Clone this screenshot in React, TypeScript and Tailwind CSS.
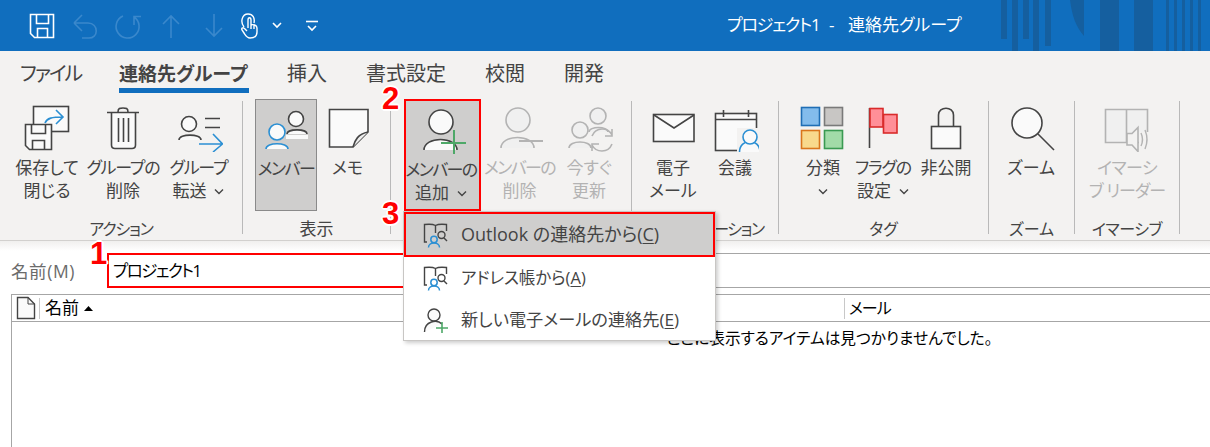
import React from "react";

const ink = "#444444";
const off = "#b3b3b3";
const blue = "#2b8fd3";
const F = "#fafafa";

const s = { fill: "none", stroke: ink, strokeWidth: 1.6 };

function Ic({ children, size = 48 }: { children: React.ReactNode; size?: number }) {
  return (
    <svg width={size} height={size} viewBox={`0 0 ${size} ${size}`} className="shrink-0" strokeLinejoin="miter">
      {children}
    </svg>
  );
}

function Person({ cx, cy, r, x1, x2, y, color, fill = "#fafafa" }: { cx: number; cy: number; r: number; x1: number; x2: number; y: number; color: string; fill?: string }) {
  return (
    <g stroke={color} strokeWidth={1.6} fill={fill}>
      <path d={`M${x1} ${y} C${x1} ${cy + r + 2} ${x2} ${cy + r + 2} ${x2} ${y}`} stroke={color} />
      <circle cx={cx} cy={cy} r={r} />
    </g>
  );
}

const SaveClose = () => (
  <Ic>
    <rect x="10.5" y="2.5" width="35" height="25" fill={F} stroke={ink} strokeWidth="1.6" />
    <path d="M2.5 20.5H28.5V45.5H6.5L2.5 41.5Z" fill={F} {...{ stroke: ink, strokeWidth: 1.6 }} />
    <path d="M8.5 20.5V29.5H22.5V20.5M9.5 45.5V36.5H21.5V45.5" {...s} />
    <path d="M22 19C24 14 29 13 40 13M33 6L40 13L33 20" fill="none" stroke={blue} strokeWidth="1.6" />
  </Ic>
);
const Trash = () => (
  <Ic>
    <path d="M12.5 9V41Q12.5 44.5 16 44.5H33Q36.5 44.5 36.5 41V9" fill={F} stroke={ink} strokeWidth="1.6" />
    <path d="M8 8.5H40M19 8C19 4 21 4 24 4S29 4 29 8M19.5 14V38M24.5 14V38M29.5 14V38" {...s} />
  </Ic>
);
const Forward = () => (
  <Ic>
    <Person cx={14} cy={20} r={7.5} x1={4} x2={26} y={36} color={ink} />
    <path d="M30 14.5H45M30 23.5H45" {...s} />
    <path d="M24 40H47M38 30L47.5 40L38 48" fill="none" stroke={blue} strokeWidth="1.6" />
  </Ic>
);
const Members = () => (
  <Ic>
    <Person cx={34} cy={14} r={7.5} x1={25} x2={45} y={29} color={ink} />
    <path d="M24 30H46V34H24Z" fill="#fafafa" />
    <Person cx={15} cy={27} r={8} x1={4} x2={26} y={44} color={blue} />
  </Ic>
);
const Note = () => (
  <Ic>
    <path d="M5.5 5.5H44V28L29 43H5.5Z" fill={F} stroke={ink} strokeWidth="1.6" />
    <path d="M29 43C31 36 34 30 44 28" fill="#eeeeee" stroke={ink} strokeWidth="1.6" />
  </Ic>
);
const AddMember = () => (
  <Ic>
    <Person cx={22} cy={16} r={12} x1={5} x2={38} y={44} color={ink} />
    <path d="M22 37H47M35 24V48" fill="none" stroke="#4ea868" strokeWidth="2" />
  </Ic>
);
const DelMember = () => (
  <Ic>
    <Person cx={22} cy={16} r={12} x1={5} x2={38} y={44} color={off} fill="#f0f0f0" />
    <path d="M23 37H47" fill="none" stroke={off} strokeWidth="2" />
  </Ic>
);
const Refresh = () => (
  <Ic>
    <Person cx={33} cy={12} r={8} x1={24} x2={43} y={28} color={off} fill="#f0f0f0" />
    <Person cx={15} cy={26} r={8} x1={4} x2={26} y={44} color={off} fill="#f0f0f0" />
    <path d="M27 32C29 27 33 25 37 25C42 25 45 27 47 31M47 25V32H40M47 40C45 45 41 47 37 47C32 47 29 45 27 41M27 47V40H34" fill="none" stroke={off} strokeWidth="1.6" />
  </Ic>
);
const Mail = () => (
  <Ic>
    <rect x="4.5" y="10.5" width="40.5" height="27" fill={F} stroke={ink} strokeWidth="1.6" />
    <path d="M5 11L25 24L45 11" {...s} />
  </Ic>
);
const Calendar = () => (
  <Ic>
    <rect x="4.5" y="9.5" width="41" height="37" fill={F} stroke={ink} strokeWidth="1.6" />
    <path d="M4.5 15.5H45.5M12.5 6V13M37.5 6V13" {...s} />
    <rect x="26" y="24" width="22" height="24" fill="#f3f2f1" />
    <path d="M28.5 48C28.5 34 49 34 49 48" fill="#fafafa" stroke={blue} strokeWidth="1.6" />
    <circle cx="39" cy="33" r="7" fill="#fafafa" stroke={blue} strokeWidth="1.6" />
  </Ic>
);
const Categories = () => (
  <Ic>
    <rect x="2.5" y="3.5" width="18" height="18" fill="#83bcec" stroke="#1f6eb5" strokeWidth="1.6" />
    <rect x="25.5" y="3.5" width="18" height="18" fill="#c8c6c4" stroke="#7a7a7a" strokeWidth="1.6" />
    <rect x="2.5" y="26.5" width="18" height="18" fill="#f8d98c" stroke="#d9761c" strokeWidth="1.6" />
    <rect x="25.5" y="26.5" width="18" height="18" fill="#a2dba8" stroke="#3a9a52" strokeWidth="1.6" />
  </Ic>
);
const Flag = () => (
  <Ic>
    <path d="M10.5 4V44" {...s} />
    <rect x="11" y="4.5" width="13" height="18.5" fill="#ff8f98" stroke="#d92b2b" strokeWidth="1.6" />
    <rect x="24.5" y="10.5" width="13.5" height="18.5" fill="#ff8f98" stroke="#d92b2b" strokeWidth="1.6" />
  </Ic>
);
const Lock = () => (
  <Ic>
    <path d="M16.5 22V11C16.5 2 31.5 2 31.5 11V22" {...s} />
    <rect x="9.5" y="22.5" width="29" height="22" fill={F} stroke={ink} strokeWidth="1.6" />
  </Ic>
);
const Zoom = () => (
  <Ic>
    <circle cx="20" cy="19" r="15" fill={F} stroke={ink} strokeWidth="1.6" />
    <path d="M31 30L47 46" {...s} />
  </Ic>
);
const Immersive = () => (
  <Ic>
    <path d="M2.5 5.5H44.5V38.5H2.5Z" fill="#f0f0f0" stroke={off} strokeWidth="1.6" />
    <path d="M23.5 5.5V38" stroke={off} strokeWidth="1.6" fill="none" />
    <path d="M24 29.5H29L35 23.5V47.5L29 41H24Z" fill="#f3f2f1" stroke={off} strokeWidth="1.6" />
    <rect x="36" y="28" width="12" height="14" fill="#f3f2f1" />
    <path d="M38 29Q41 35.5 38 42M42 26Q46 35.5 42 45" fill="none" stroke={off} strokeWidth="1.4" />
  </Ic>
);

const Chevron = ({ flush }: { flush?: boolean }) => (
  <svg width="10" height="7" viewBox="0 0 10 7" className={`inline-block align-[2px] ${flush ? "" : "ml-[8px]"}`}>
    <path d="M1 1.5L5 5.5L9 1.5" fill="none" stroke={ink} strokeWidth="1.4" />
  </svg>
);

function Btn({
  w,
  icon,
  lines,
  chev,
  disabled,
  track = "",
  track2 = "",
  className = "",
}: {
  w: string;
  icon: React.ReactNode;
  lines: string[];
  chev?: boolean;
  disabled?: boolean;
  track?: string;
  track2?: string;
  className?: string;
}) {
  return (
    <div className={`${w} h-[112px] flex flex-col items-center pt-[5px] ${className}`}>
      {icon}
      <div className={`text-[17px] leading-[23px] mt-[4px] text-center whitespace-nowrap ${disabled ? "text-[#b3b3b3]" : "text-[#444444]"}`}>
        {lines.map((l, i) => (
          <div key={i} className={i === 0 ? track : track2}>
            {l}
            {chev && i === lines.length - 1 ? <Chevron flush={l === ""} /> : null}
          </div>
        ))}
      </div>
    </div>
  );
}

function Group({ w, pl, label, labelClass = "text-[16px]", children }: { w: string; pl: string; label: string; labelClass?: string; children: React.ReactNode }) {
  return (
    <div className={`${w} shrink-0 flex flex-col h-[139px] mt-[4px]`}>
      <div className={`flex ${pl} h-[112px]`}>{children}</div>
      {label ? <div className={`leading-[20px] mt-[8px] text-center text-[#444444] whitespace-nowrap ${labelClass}`}>{label}</div> : null}
    </div>
  );
}

const Sep = () => <div className="w-px h-[133px] mt-[6px] bg-[#b9b9b9] shrink-0" />;

const q = { fill: "none", stroke: "#ffffff", strokeWidth: 1.6 };
const qo = { fill: "none", stroke: "#3a88cc", strokeWidth: 1.6 };

function TitleBar() {
  return (
    <div className="relative h-[51px] bg-[#106ebe] flex items-center pl-[28px] shrink-0 overflow-hidden">
      <svg width="28" height="28" viewBox="0 0 28 28" className="shrink-0">
        <path d="M2.5 2.5H25.5V25.5H6.5L2.5 21.5Z" {...q} />
        <path d="M8.5 2.5V11.5H20.5V2.5M9.5 25.5V16.5H19.5V25.5" {...q} />
      </svg>
      <svg width="28" height="28" viewBox="0 0 28 28" className="shrink-0 ml-[15px]">
        <path d="M3 11H17C28 11 28 27 17 26H11M3 11L11 3M3 11L11 19" {...qo} />
      </svg>
      <svg width="28" height="28" viewBox="0 0 28 28" className="shrink-0 ml-[15px]">
        <path d="M20 5A11.5 11.5 0 1 1 9 4M20 13V4.5H27" {...qo} />
      </svg>
      <svg width="28" height="28" viewBox="0 0 28 28" className="shrink-0 ml-[15px]">
        <path d="M14 26V4M6 12L14 4L22 12" {...qo} />
      </svg>
      <svg width="28" height="28" viewBox="0 0 28 28" className="shrink-0 ml-[15px]">
        <path d="M14 2V24M6 16L14 24L22 16" {...qo} />
      </svg>
      <svg width="20" height="28" viewBox="0 0 20 28" className="shrink-0 ml-[11px]">
        <path d="M5 15C1 10 3 2 9 2C14 2 16 6 15 11M9 16V8C9 5 12 5 12 8V13C14 12 18 13 18 16V20C18 25 15 26 11 26C8 26 7 24 5 21L3 18C2 16 4 15 6 17L8 19M12 13V17M15 13V17" fill="none" stroke="#ffffff" strokeWidth="1.4" />
      </svg>
      <svg width="10" height="7" viewBox="0 0 10 7" className="shrink-0 ml-[13px]">
        <path d="M1 1L5 5L9 1" {...q} />
      </svg>
      <svg width="12" height="12" viewBox="0 0 12 12" className="shrink-0 ml-[24px]">
        <path d="M0 1.5H12" {...q} />
        <path d="M2 6L6 10L10 6" {...q} />
      </svg>
      <svg width="210" height="51" viewBox="0 0 210 51" className="absolute left-[1000px] top-0" fill="#155f9f">
        <path d="M1 0h6v39H1zM12 0h6v51h-6zM23 0h6v39h-6zM33 0h6v51h-6zM45 0h6v46h-6zM70 0h14v36C76 27 72 16 70 0zM100 0h19v51h-19zM134 0h19v51h-19zM166 0h3v51h-3zM174 0h3v51h-3zM182 0h3v51h-3zM190 0h3v51h-3zM198 0h3v51h-3z" />
      </svg>
      <div className="absolute left-[727px] top-[15px] text-[17px] leading-[20px] text-white whitespace-nowrap flex">
        <span className="w-[88px] tracking-[-1.2px]">プロジェクト1</span>
        <span className="ml-[14px] w-[19px]">-</span>
        <span>連絡先グループ</span>
      </div>
    </div>
  );
}

function Tabs() {
  return (
    <div className="h-[44px] flex bg-[#f3f2f1] text-[20px] text-[#444444] pl-[20px] shrink-0 leading-[24px] pt-[11px]">
      <div className="w-[57px] tracking-[-2px] whitespace-nowrap">ファイル</div>
      <div className="ml-[42px] flex flex-col w-[130px] font-bold whitespace-nowrap text-[19px]">
        連絡先グループ
        <div className="h-[5px] bg-[#106ebe] mt-[2px]" />
      </div>
      <div className="ml-[38px] w-[40px]">挿入</div>
      <div className="ml-[39px] w-[80px]">書式設定</div>
      <div className="ml-[39px] w-[40px]">校閲</div>
      <div className="ml-[39px]">開発</div>
    </div>
  );
}

function Ribbon() {
  return (
    <div className="h-[146px] bg-[#f3f2f1] border-b border-[#d2d0ce] flex shrink-0">
      <Group w="w-[242px]" pl="pl-[9px]" label="アクション" labelClass="text-[16px] tracking-[-1.2px]">
        <Btn w="w-[76px]" icon={<SaveClose />} lines={["保存して", "閉じる"]} />
        <Btn w="w-[76px]" icon={<Trash />} lines={["グループの", "削除"]} track="tracking-[-1.2px]" />
        <Btn w="w-[75px]" icon={<Forward />} lines={["グループ", "転送"]} chev track="tracking-[-1.2px]" />
      </Group>
      <Sep />
      <Group w="w-[147px]" pl="pl-[12px]" label="表示" labelClass="text-[17px]">
        <Btn w="w-[62px]" icon={<Members />} lines={["メンバー"]} track="tracking-[-1.6px]" className="bg-[#cfcecd] border border-[#8a8a8a]" />
        <Btn w="w-[61px]" icon={<Note />} lines={["メモ"]} />
      </Group>
      <Sep />
      <Group w="w-[240px]" pl="pl-[13px]" label="">
        <Btn w="w-[77px]" icon={<AddMember />} lines={["メンバーの", "追加"]} chev track="tracking-[-1.6px] pr-[3px]" track2="pr-[3px]" className="bg-[#cfcecd] border-2 border-[#ff0000]" />
        <Btn w="w-[77px]" icon={<DelMember />} lines={["メンバーの", "削除"]} disabled track="tracking-[-1.6px]" />
        <Btn w="w-[62px]" icon={<Refresh />} lines={["今すぐ", "更新"]} disabled />
      </Group>
      <Sep />
      <Group w="w-[146px]" pl="pl-[10px]" label="ーション" labelClass="text-[16px] tracking-[-1.5px] pl-[67px]">
        <Btn w="w-[62px]" icon={<Mail />} lines={["電子", "メール"]} />
        <Btn w="w-[62px]" icon={<Calendar />} lines={["会議"]} />
      </Group>
      <Sep />
      <Group w="w-[209px]" pl="pl-[14px]" label="タグ">
        <Btn w="w-[60px]" icon={<Categories />} lines={["分類", ""]} chev />
        <Btn w="w-[60px]" icon={<Flag />} lines={["フラグの", "設定"]} chev track="tracking-[-1.2px]" />
        <Btn w="w-[66px]" icon={<Lock />} lines={["非公開"]} />
      </Group>
      <Sep />
      <Group w="w-[85px]" pl="pl-[12px]" label="ズーム">
        <Btn w="w-[60px]" icon={<Zoom />} lines={["ズーム"]} />
      </Group>
      <Sep />
      <Group w="w-[104px]" pl="pl-[10px]" label="イマーシブ" labelClass="text-[16px] tracking-[-0.5px]">
        <Btn w="w-[84px]" icon={<Immersive />} lines={["イマーシ", "ブ リーダー"]} disabled track="tracking-[-0.6px]" track2="tracking-[-1px]" />
      </Group>
      <Sep />
    </div>
  );
}

function Content() {
  return (
    <div className="flex-1 bg-white bg-gradient-to-b from-[#f0efee] to-white to-[10px] flex flex-col min-h-0 overflow-hidden">
      <div className="flex h-[35px] mt-[12px] shrink-0">
        <div className="w-[107px] pl-[11px] text-[17.5px] leading-[35px] text-[#6b6b6b] pt-[1px] whitespace-nowrap tracking-[0.6px]">名前(M)</div>
        <div className="flex-1 border-y border-[#a6a6a6]">
          <div className="w-[320px] h-[35px] -mt-px border-2 border-[#ff0000] pl-[4px] text-[16.5px] leading-[31px] text-black tracking-[-1.5px]">プロジェクト1</div>
        </div>
      </div>
      <div className="ml-[11px] mt-[6px] flex-1 border-l border-t border-[#a6a6a6] flex flex-col">
        <div className="h-[27px] border-b border-[#a6a6a6] flex items-center shrink-0 text-[17px] text-black">
          <svg width="20" height="24" viewBox="0 0 20 24" className="ml-[4px] shrink-0">
            <path d="M1.5 1.5H12L18.5 8V22.5H1.5Z" fill="#fafafa" stroke="#444444" strokeWidth="1.4" />
            <path d="M12 1.5V8H18.5" fill="none" stroke="#444444" strokeWidth="1" />
          </svg>
          <div className="w-px h-[21px] bg-[#c8c8c8] ml-[3px]" />
          <div className="ml-[5px] w-[34px] whitespace-nowrap">名前</div>
          <svg width="9" height="5" viewBox="0 0 9 5" className="shrink-0 ml-[5px]">
            <path d="M0 5L4.5 0L9 5Z" fill="#000000" />
          </svg>
          <div className="w-px h-[21px] bg-[#c8c8c8] ml-[751px]" />
          <div className="ml-[4px] text-[16px] tracking-[-1px]">メール</div>
        </div>
        <div className="ml-[655px] pt-[6px] text-[15.7px] leading-[20px] text-black whitespace-nowrap">ここに表示するアイテムは見つかりませんでした。</div>
      </div>
    </div>
  );
}

function MenuItem({ icon, text, u, after, hot, size }: { icon: React.ReactNode; text: string; u: string; after: string; hot?: boolean; size: string }) {
  return (
    <div className={`flex items-center text-[#444444] ${size} ${hot ? "h-[45px] bg-[#cfcecd] border-2 border-[#ff0000]" : "h-[42px] border-x-2 border-transparent"}`}>
      <div className="w-[55px] pl-[17px] shrink-0 flex">{icon}</div>
      <span className="whitespace-pre">
        {text}
        <span className="underline underline-offset-2">{u}</span>
        {after}
      </span>
    </div>
  );
}

const BookIcon = () => (
  <svg width="26" height="26" viewBox="0 0 26 26">
    <path d="M4 20H1.5V2.5C6 2 10 2 12.5 3.5C15 2 19 2 23.5 2.5V9M12.5 3.5V11" fill="none" stroke="#444444" strokeWidth="1.4" />
    <circle cx="18.5" cy="13" r="3.5" fill="none" stroke="#444444" strokeWidth="1.4" />
    <path d="M21 16L24 19" stroke="#444444" strokeWidth="1.4" />
    <circle cx="11" cy="17.5" r="3.2" fill="none" stroke={blue} strokeWidth="1.5" />
    <path d="M5.5 25.5C5.5 19.5 16.5 19.5 16.5 25.5" fill="none" stroke={blue} strokeWidth="1.5" />
  </svg>
);
const NewMailIcon = () => (
  <svg width="26" height="26" viewBox="0 0 26 26">
    <circle cx="11" cy="8" r="6" fill="#fafafa" stroke="#444444" strokeWidth="1.4" />
    <path d="M1.5 25C1.5 14 14 12 19 17" fill="#fafafa" stroke="#444444" strokeWidth="1.4" />
    <path d="M13 21H25M19 15V26" fill="none" stroke="#4ea868" strokeWidth="1.6" />
  </svg>
);

const num = "absolute text-[31px] leading-none font-bold text-[#ff0000] [font-family:'Liberation_Sans',sans-serif] [text-shadow:-2px_0_0_#fff,2px_0_0_#fff,0_-2px_0_#fff,0_2px_0_#fff,-1px_-1px_0_#fff,1px_1px_0_#fff,-1px_1px_0_#fff,1px_-1px_0_#fff]";

export default function App() {
  return (
    <div className="relative w-[1210px] h-[447px] overflow-hidden flex flex-col bg-white [font-family:'Open_Sans','Noto_Sans_CJK_JP',sans-serif] [font-feature-settings:'palt']">
      <TitleBar />
      <Tabs />
      <Ribbon />
      <Content />

      <div className="absolute left-[403px] top-[211px] w-[313px] h-[130px] bg-white border border-[#c8c6c4] shadow-[2px_2px_4px_rgba(0,0,0,0.2)] z-10">
        <MenuItem hot size="text-[18px]" icon={<BookIcon />} text="Outlook の連絡先から(" u="C" after=")" />
        <MenuItem size="text-[16.5px]" icon={<BookIcon />} text="アドレス帳から(" u="A" after=")" />
        <MenuItem size="text-[17.2px]" icon={<NewMailIcon />} text="新しい電子メールの連絡先(" u="E" after=")" />
      </div>

      <div className={`${num} left-[90px] top-[238px] z-20`}>1</div>
      <div className={`${num} left-[382px] top-[83px] z-20`}>2</div>
      <div className={`${num} left-[382px] top-[198px] z-20`}>3</div>
    </div>
  );
}
